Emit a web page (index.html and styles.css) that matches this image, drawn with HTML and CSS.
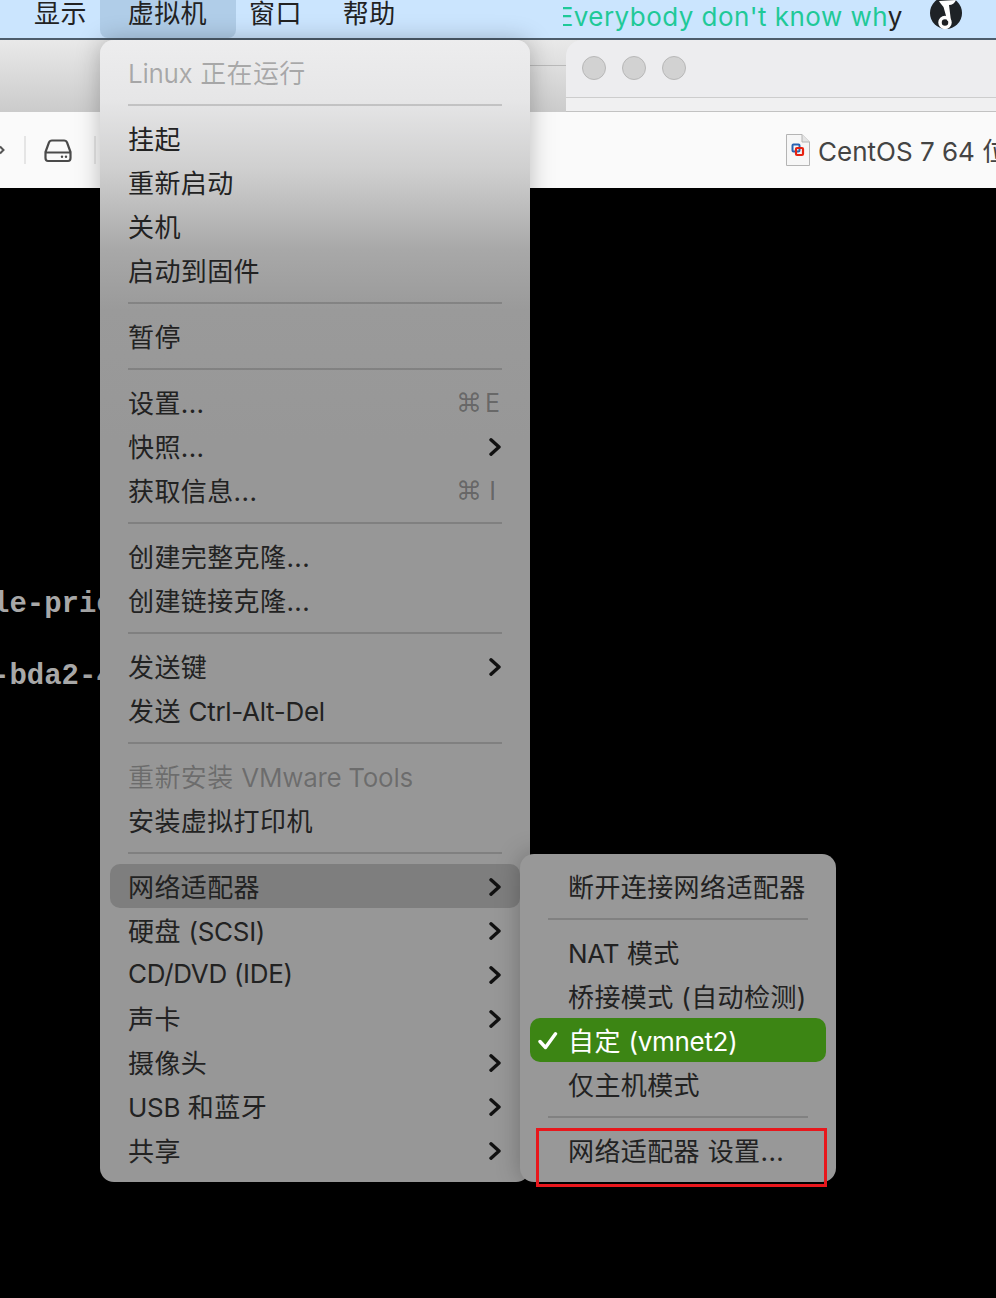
FILE: index.html
```html
<!DOCTYPE html>
<html lang="zh-CN">
<head>
  <meta charset="UTF-8">
  <title>虚拟机</title>
  <link rel="stylesheet" href="styles.css">
</head>
<body>
  <svg class="sprites" width="0" height="0">
    <symbol id="chevron" viewBox="0 0 12 18">
      <path d="M2 1.800 L10 9 L2 16.200" fill="none" stroke="currentColor" stroke-width="3.400" stroke-linecap="round" stroke-linejoin="round"/>
    </symbol>
  </svg>

  <div class="menubar">
    <div class="bar-item">显示</div>
    <div class="bar-item active">虚拟机</div>
    <div class="bar-item">窗口</div>
    <div class="bar-item">帮助</div>
    <div class="lyric">Everybody don't know wh<span class="lyric-rest">y</span></div>
    <svg class="note-icon" width="32" height="30" viewBox="0 0 32 30">
      <circle cx="16" cy="13" r="16" fill="#1e2226"/>
      <path d="M9 1 L26 0 C25 3 22 5 19 5 L21 21 L17.500 21 L13.500 7 C12 5 10 3 9 1 Z" fill="#fff"/>
      <circle cx="15" cy="22.500" r="5" fill="none" stroke="#fff" stroke-width="3.500"/>
    </svg>
  </div>

  <div class="title-area">
    <div class="back-window"></div>
    <div class="front-window">
      <div class="lights">
        <span class="light"></span>
        <span class="light"></span>
        <span class="light"></span>
      </div>
      <div class="tab-strip"></div>
    </div>
  </div>

  <div class="toolbar">
    <svg class="tool-arrow" width="24" height="10" viewBox="0 0 24 10">
      <path d="M0 1.500 L3.500 5 L0 8.500" fill="none" stroke="#555" stroke-width="2"/>
    </svg>
    <span class="tool-sep"></span>
    <svg class="drive-icon" width="28" height="24" viewBox="1 0 28 24">
      <path d="M6 3.500 C6.500 2 7.500 1.500 9 1.500 L21 1.500 C22.500 1.500 23.500 2 24 3.500 L27.500 13 L27.500 19 C27.500 21 26.500 22 25 22 L5 22 C3.500 22 2.500 21 2.500 19 L2.500 13 Z M2.500 13.500 L27.500 13.500" fill="none" stroke="#4a4a4a" stroke-width="2.200"/>
      <circle cx="19" cy="17.800" r="1.200" fill="#4a4a4a"/>
      <circle cx="23" cy="17.800" r="1.200" fill="#4a4a4a"/>
    </svg>
    <span class="tool-sep"></span>
    <div class="doc-title">
      <svg class="doc-icon" width="24" height="32" viewBox="0 0 24 32">
        <path d="M.5 .5 L16 .5 L23.500 8 L23.500 31.500 L.5 31.500 Z" fill="#f6f6f6" stroke="#b4b4b4"/>
        <path d="M16 .5 L16 8 L23.500 8" fill="#e4e4e4" stroke="#b4b4b4"/>
        <rect x="6.500" y="10.500" width="7" height="7" rx="1" fill="none" stroke="#2a62b0" stroke-width="2"/>
        <rect x="10" y="14" width="7" height="7" rx="1" fill="none" stroke="#e6200f" stroke-width="2.200"/>
      </svg>
      <span class="doc-name">CentOS 7 64 位</span>
    </div>
  </div>

  <div class="console">
    <div class="console-line">le-prio</div>
    <div class="console-line">-bda2-4</div>
  </div>

  <div class="menu">
    <div class="row disabled"><span><span class="en">Linux</span> 正在运行</span></div>
    <hr>
    <div class="row">挂起</div>
    <div class="row">重新启动</div>
    <div class="row">关机</div>
    <div class="row">启动到固件</div>
    <hr>
    <div class="row">暂停</div>
    <hr>
    <div class="row">设置...<span class="shortcut"><i>⌘</i><b>E</b></span></div>
    <div class="row">快照...<svg class="chev"><use href="#chevron"/></svg></div>
    <div class="row">获取信息...<span class="shortcut"><i>⌘</i><b>I</b></span></div>
    <hr>
    <div class="row">创建完整克隆...</div>
    <div class="row">创建链接克隆...</div>
    <hr>
    <div class="row">发送键<svg class="chev"><use href="#chevron"/></svg></div>
    <div class="row"><span>发送 <span class="en">Ctrl-Alt-Del</span></span></div>
    <hr>
    <div class="row disabled"><span>重新安装 <span class="en">VMware Tools</span></span></div>
    <div class="row">安装虚拟打印机</div>
    <hr>
    <div class="row open">网络适配器<svg class="chev"><use href="#chevron"/></svg></div>
    <div class="row"><span>硬盘 <span class="en">(SCSI)</span></span><svg class="chev"><use href="#chevron"/></svg></div>
    <div class="row"><span class="en">CD/DVD (IDE)</span><svg class="chev"><use href="#chevron"/></svg></div>
    <div class="row">声卡<svg class="chev"><use href="#chevron"/></svg></div>
    <div class="row">摄像头<svg class="chev"><use href="#chevron"/></svg></div>
    <div class="row"><span><span class="en">USB</span> 和蓝牙</span><svg class="chev"><use href="#chevron"/></svg></div>
    <div class="row">共享<svg class="chev"><use href="#chevron"/></svg></div>
  </div>

  <div class="submenu">
    <div class="row">断开连接网络适配器</div>
    <hr>
    <div class="row"><span><span class="en">NAT</span> 模式</span></div>
    <div class="row"><span>桥接模式 (自动检测)</span></div>
    <div class="row selected">
      <svg class="check" width="20" height="18" viewBox="0 0 20 18">
        <path d="M2 9.500 L7.500 15.500 L17.500 1.800" fill="none" stroke="#fff" stroke-width="3.400" stroke-linecap="round" stroke-linejoin="round"/>
      </svg>
      <span>自定 <span class="en">(vmnet2)</span></span>
    </div>
    <div class="row">仅主机模式</div>
    <hr>
    <div class="row">网络适配器 设置...</div>
    <div class="callout"></div>
  </div>
</body>
</html>
```

FILE: styles.css
```css
* {
  margin: 0;
  padding: 0;
  box-sizing: border-box;
}

body {
  width: 996px;
  height: 1298px;
  overflow: hidden;
  position: relative;
  display: flex;
  flex-direction: column;
  background: #000;
  color: #222;
  font-family: Inter, "Noto Sans CJK SC", "Liberation Sans", sans-serif;
  font-size: 26px;
  letter-spacing: 0.4px;
}

.en {
  letter-spacing: -0.3px;
}

.sprites {
  position: absolute;
}

/* top menu bar */
.menubar {
  height: 40px;
  flex-shrink: 0;
  display: flex;
  padding-left: 21px;
  background: #cbe5fe;
  border-bottom: 2px solid #4d5d6c;
  line-height: 28px;
  white-space: nowrap;
}

.bar-item {
  padding: 0 13px;
  height: 38px;
  flex-shrink: 0;
}

.bar-item.active {
  padding: 0 29px 0 28px;
  background: #b0cde8;
  border-radius: 0 0 8px 8px;
}

.bar-item:nth-child(3) {
  margin-right: 15px;
}

.lyric {
  width: 339px;
  flex-shrink: 0;
  margin-left: 154px;
  overflow: hidden;
  white-space: nowrap;
  text-indent: -5px;
  letter-spacing: 0.46px;
  color: #1fc998;
  line-height: 34px;
}

.lyric-rest {
  color: #222;
}

.note-icon {
  margin-left: 28px;
  display: block;
  flex-shrink: 0;
}

/* window chrome */
.title-area {
  height: 72px;
  flex-shrink: 0;
  display: flex;
  background: linear-gradient(180deg, #e9e9e9 0%, #cbcbcb 100%);
}

.back-window {
  flex: 1;
}

.back-window::after {
  content: "";
  display: block;
  height: 1px;
  margin: 25px 0 0 500px;
  background: #b9b9b9;
}

.front-window {
  width: 430px;
  background: #ededef;
  border-top-left-radius: 16px;
  border-bottom: 1px solid #c2c2c2;
  display: flex;
  flex-direction: column;
}

.lights {
  height: 58px;
  padding: 16px 0 0 16px;
  display: flex;
  gap: 16px;
  border-bottom: 1px solid #cdcdcd;
}

.light {
  width: 24px;
  height: 24px;
  border-radius: 50%;
  background: #d2d2d2;
  border: 1px solid #b8b8b8;
}

.tab-strip {
  flex: 1;
  background: #f0f0f1;
}

.toolbar {
  height: 76px;
  flex-shrink: 0;
  display: flex;
  align-items: center;
  background: #fafafa;
  color: #444;
}

.toolbar > * {
  flex-shrink: 0;
}

.tool-arrow {
  display: block;
}

.tool-sep {
  width: 2px;
  height: 28px;
  background: #e5e5e5;
}

.drive-icon {
  margin: 2px 22px 0 18px;
}

.doc-title {
  margin-left: 690px;
  display: flex;
  align-items: center;
  gap: 8px;
  white-space: nowrap;
  letter-spacing: 0;
}

.doc-name {
  margin-bottom: 2px;
}

/* guest console behind the menu */
.console {
  flex: 1;
  background: #000;
  padding-top: 397px;
  margin-left: -8px;
  font-family: "Liberation Mono", monospace;
  font-weight: bold;
  font-size: 29px;
  letter-spacing: 0;
  color: #a8a8a8;
}

.console-line {
  height: 72px;
  line-height: 40px;
}

/* menus */
.menu,
.submenu {
  position: absolute;
  display: flex;
  flex-direction: column;
  padding: 10px 0;
  border-radius: 14px;
  box-shadow: 0 0 24px rgba(0, 0, 0, 0.25);
}

.menu {
  left: 100px;
  top: 40px;
  width: 430px;
  height: 1142px;
  background: linear-gradient(180deg, #ededee 0, #e6e6e7 60px, #cfcfcf 130px, #a8a8a8 210px, #9a9a9a 270px, #979797 400px);
}

.submenu {
  left: 520px;
  top: 854px;
  width: 316px;
  height: 328px;
  background: #989898;
}

.row {
  height: 44px;
  flex-shrink: 0;
  margin: 0 10px;
  padding: 0 20px 1px 18px;
  display: flex;
  align-items: center;
  justify-content: space-between;
  white-space: nowrap;
  border-radius: 10px;
}

.submenu .row {
  padding-left: 38px;
  justify-content: flex-start;
}

.row.disabled {
  color: rgba(0, 0, 0, 0.28);
}

.row.open {
  background: #7e7e7e;
}

.submenu .row.selected {
  background: #3c8514;
  color: #fff;
  padding-left: 8px;
  gap: 10px;
}

.check {
  margin-top: 2px;
}

hr {
  height: 2px;
  margin: 10px 28px;
  border: none;
  background: rgba(0, 0, 0, 0.15);
}

.chev {
  width: 12px;
  height: 18px;
  margin: 2px -1px 0 0;
  color: #111;
}

.shortcut {
  display: flex;
  align-items: center;
  width: 42px;
  margin-top: 2px;
  color: rgba(0, 0, 0, 0.33);
  font-size: 25px;
  letter-spacing: 0;
}

.shortcut i {
  font-style: normal;
  font-family: "DejaVu Sans", sans-serif;
  font-size: 26px;
  width: 27px;
  margin-left: -2px;
  margin-right: 2px;
}

.shortcut b {
  font-weight: normal;
  width: 15px;
  text-align: center;
}

.callout {
  position: absolute;
  left: 16px;
  top: 274px;
  width: 291px;
  height: 59px;
  border: 3px solid #e8171c;
}
```
